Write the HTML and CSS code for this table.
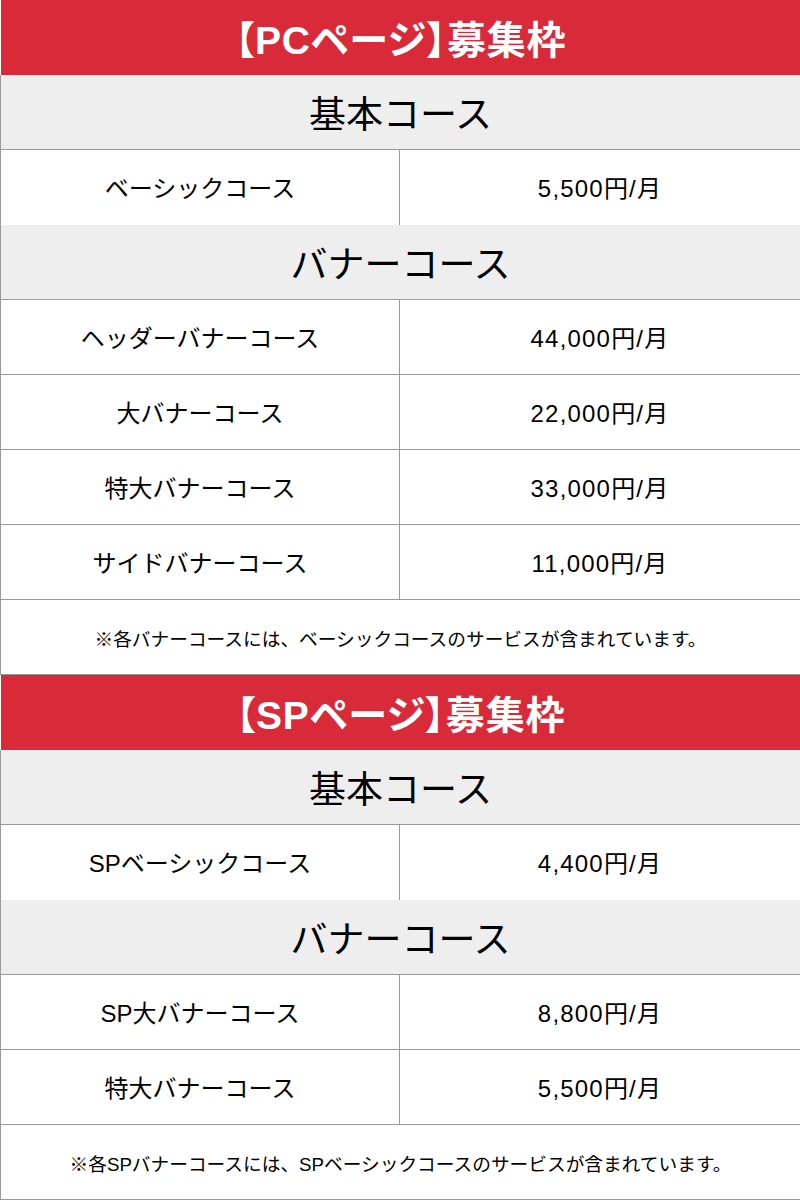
FILE: index.html
```html
<!DOCTYPE html>
<html lang="ja">
<head>
<meta charset="utf-8">
<title>募集枠</title>
<link rel="stylesheet" href="styles.css">
</head>
<body>
<div class="page">
  <div class="section-title">【PCページ】募集枠</div>
  <div class="group-title">基本コース</div>
  <div class="row row--end"><div class="cell cell--name">ベーシックコース</div><div class="cell cell--price">5,500円/月</div></div>
  <div class="group-title">バナーコース</div>
  <div class="row"><div class="cell cell--name">ヘッダーバナーコース</div><div class="cell cell--price">44,000円/月</div></div>
  <div class="row"><div class="cell cell--name">大バナーコース</div><div class="cell cell--price">22,000円/月</div></div>
  <div class="row"><div class="cell cell--name">特大バナーコース</div><div class="cell cell--price">33,000円/月</div></div>
  <div class="row"><div class="cell cell--name">サイドバナーコース</div><div class="cell cell--price">11,000円/月</div></div>
  <div class="note">※各バナーコースには、ベーシックコースのサービスが含まれています。</div>

  <div class="section-title">【SPページ】募集枠</div>
  <div class="group-title">基本コース</div>
  <div class="row row--end"><div class="cell cell--name">SPベーシックコース</div><div class="cell cell--price">4,400円/月</div></div>
  <div class="group-title">バナーコース</div>
  <div class="row"><div class="cell cell--name">SP大バナーコース</div><div class="cell cell--price">8,800円/月</div></div>
  <div class="row"><div class="cell cell--name">特大バナーコース</div><div class="cell cell--price">5,500円/月</div></div>
  <div class="note">※各SPバナーコースには、SPベーシックコースのサービスが含まれています。</div>
</div>
</body>
</html>
```
FILE: styles.css
```css
html, body {
  margin: 0;
  padding: 0;
  background: #ffffff;
}
.page {
  width: 800px;
  font-family: "Liberation Sans", "Noto Sans CJK JP", sans-serif;
  color: #000;
}
.section-title,
.group-title,
.row,
.note {
  box-sizing: border-box;
  height: 75px;
  display: flex;
  align-items: center;
  justify-content: center;
  border-left: 1px solid #9a9a9a;
}
.section-title {
  background: #d92a3a;
  color: #fff;
  font-weight: bold;
  font-size: 39px;
  letter-spacing: 0.8px;
  font-feature-settings: "palt" 1;
  border-left-color: #fff;
  padding-bottom: 2px;
}
.group-title {
  background: #eeeeee;
  font-size: 37px;
  border-bottom: 1px solid #9a9a9a;
}
.row {
  display: grid;
  grid-template-columns: 399px 400px;
  align-items: stretch;
  border-bottom: 1px solid #9a9a9a;
  font-size: 24px;
}
.row--end {
  border-bottom: none;
}
.cell {
  display: flex;
  align-items: center;
  justify-content: center;
  padding-bottom: 2px;
}
.cell--name {
  border-right: 1px solid #9a9a9a;
}
.cell--price {
  letter-spacing: 1.2px;
}
.note {
  font-size: 18.7px;
  border-bottom: 1px solid #9a9a9a;
}
```
